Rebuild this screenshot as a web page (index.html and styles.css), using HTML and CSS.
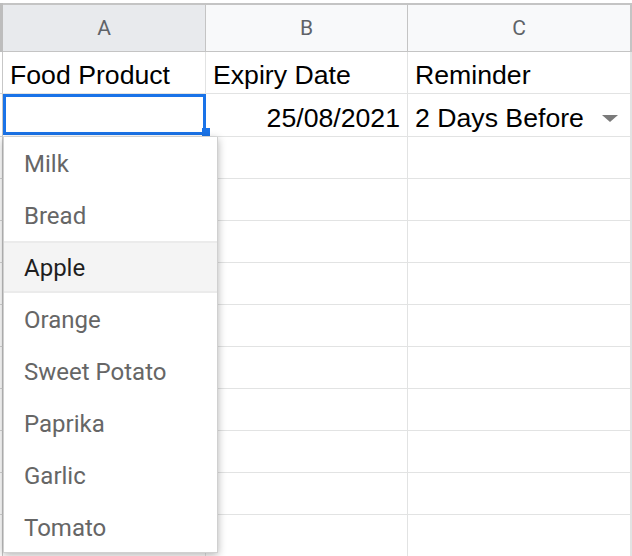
FILE: index.html
```html
<!DOCTYPE html>
<html>
<head>
<meta charset="utf-8">
<link rel="stylesheet" href="styles.css">
</head>
<body>
<div class="sheet">
  <div class="grid">
    <div class="stub stub-head"></div>
    <div class="colhead colhead-sel">A</div>
    <div class="colhead">B</div>
    <div class="colhead colhead-last">C</div>

    <div class="stub"></div>
    <div class="cell">Food Product</div>
    <div class="cell">Expiry Date</div>
    <div class="cell cell-last">Reminder</div>

    <div class="stub stub-tall"></div>
    <div class="cell cell-tall"></div>
    <div class="cell cell-tall cell-right">25/08/2021</div>
    <div class="cell cell-tall cell-last cell-drop"><span>2 Days Before</span><span class="arrow"></span></div>

    <div class="stub"></div><div class="cell"></div><div class="cell"></div><div class="cell cell-last"></div>
    <div class="stub"></div><div class="cell"></div><div class="cell"></div><div class="cell cell-last"></div>
    <div class="stub"></div><div class="cell"></div><div class="cell"></div><div class="cell cell-last"></div>
    <div class="stub"></div><div class="cell"></div><div class="cell"></div><div class="cell cell-last"></div>
    <div class="stub"></div><div class="cell"></div><div class="cell"></div><div class="cell cell-last"></div>
    <div class="stub"></div><div class="cell"></div><div class="cell"></div><div class="cell cell-last"></div>
    <div class="stub"></div><div class="cell"></div><div class="cell"></div><div class="cell cell-last"></div>
    <div class="stub"></div><div class="cell"></div><div class="cell"></div><div class="cell cell-last"></div>
    <div class="stub"></div><div class="cell"></div><div class="cell"></div><div class="cell cell-last"></div>
    <div class="stub"></div><div class="cell"></div><div class="cell"></div><div class="cell cell-last"></div>
  </div>

  <div class="selection"><span class="handle"></span></div>

  <ul class="dropdown">
    <li class="item">Milk</li>
    <li class="item">Bread</li>
    <li class="item item-hover">Apple</li>
    <li class="item">Orange</li>
    <li class="item">Sweet Potato</li>
    <li class="item">Paprika</li>
    <li class="item">Garlic</li>
    <li class="item">Tomato</li>
  </ul>
</div>
</body>
</html>
```

FILE: styles.css
```css
html, body {
  margin: 0;
  padding: 0;
  background: #ffffff;
  overflow: hidden;
}

.sheet {
  position: relative;
  width: 632px;
  height: 556px;
  padding-top: 3px;
  box-sizing: border-box;
}

.grid {
  display: grid;
  grid-template-columns: 3px 203px 202px 224px;
  grid-template-rows: 49px 42px 43px repeat(10, 42px);
}

.stub {
  background: #ffffff;
  border-right: 1px solid #c7c7c7;
  box-sizing: border-box;
  border-bottom: 1px solid #d6d6d6;
}

.stub-head {
  background: #bdbdbd;
  border: none;
}

.colhead {
  display: flex;
  align-items: center;
  justify-content: center;
  background: #f8f9fa;
  border-top: 2px solid #c4c4c4;
  border-right: 1px solid #c4c4c4;
  border-bottom: 1px solid #c4c4c4;
  box-sizing: border-box;
  font-family: Roboto, "Liberation Sans", sans-serif;
  font-size: 21px;
  color: #5f6368;
}

.colhead-sel {
  background: #e8eaed;
}

.colhead-last {
  border-right: 2px solid #c4c4c4;
}

.cell {
  display: flex;
  align-items: flex-end;
  box-sizing: border-box;
  border-right: 1px solid #e2e3e3;
  border-bottom: 1px solid #e2e3e3;
  font-family: "Liberation Sans", Arial, sans-serif;
  font-size: 26.67px;
  line-height: 1;
  color: #000000;
  padding: 0 6px 4px 7px;
  white-space: nowrap;
}

.cell-last {
  border-right: 2px solid #e2e3e3;
}

.cell-right {
  justify-content: flex-end;
  padding-right: 7px;
}

.cell-drop {
  justify-content: space-between;
  padding-right: 12px;
}

.arrow {
  width: 0;
  height: 0;
  border-left: 8px solid transparent;
  border-right: 8px solid transparent;
  border-top: 7px solid #7a7a7a;
  margin-bottom: 10px;
}

.selection {
  position: absolute;
  left: 3px;
  top: 94px;
  width: 203px;
  height: 41px;
  border: 3px solid #1a73e8;
  box-sizing: border-box;
}

.handle {
  position: absolute;
  right: -7px;
  bottom: -4px;
  width: 8px;
  height: 8px;
  background: #1a73e8;
}

.dropdown {
  position: absolute;
  left: 3px;
  top: 137px;
  width: 215px;
  height: 416px;
  margin: 0;
  padding: 0;
  list-style: none;
  background: #ffffff;
  box-shadow: 0 2px 8px rgba(0, 0, 0, 0.3);
  border: 1px solid #d0d0d0;
  border-top: none;
  box-sizing: border-box;
}

.item {
  display: flex;
  align-items: center;
  height: 52px;
  padding-left: 20px;
  padding-top: 2px;
  font-family: Roboto, "Liberation Sans", sans-serif;
  font-size: 24px;
  color: #666666;
  box-sizing: border-box;
  white-space: nowrap;
}

.item-hover {
  background: #f4f4f4;
  color: #1f1f1f;
  border-top: 2px solid #ebebeb;
  border-bottom: 2px solid #ebebeb;
}
```
